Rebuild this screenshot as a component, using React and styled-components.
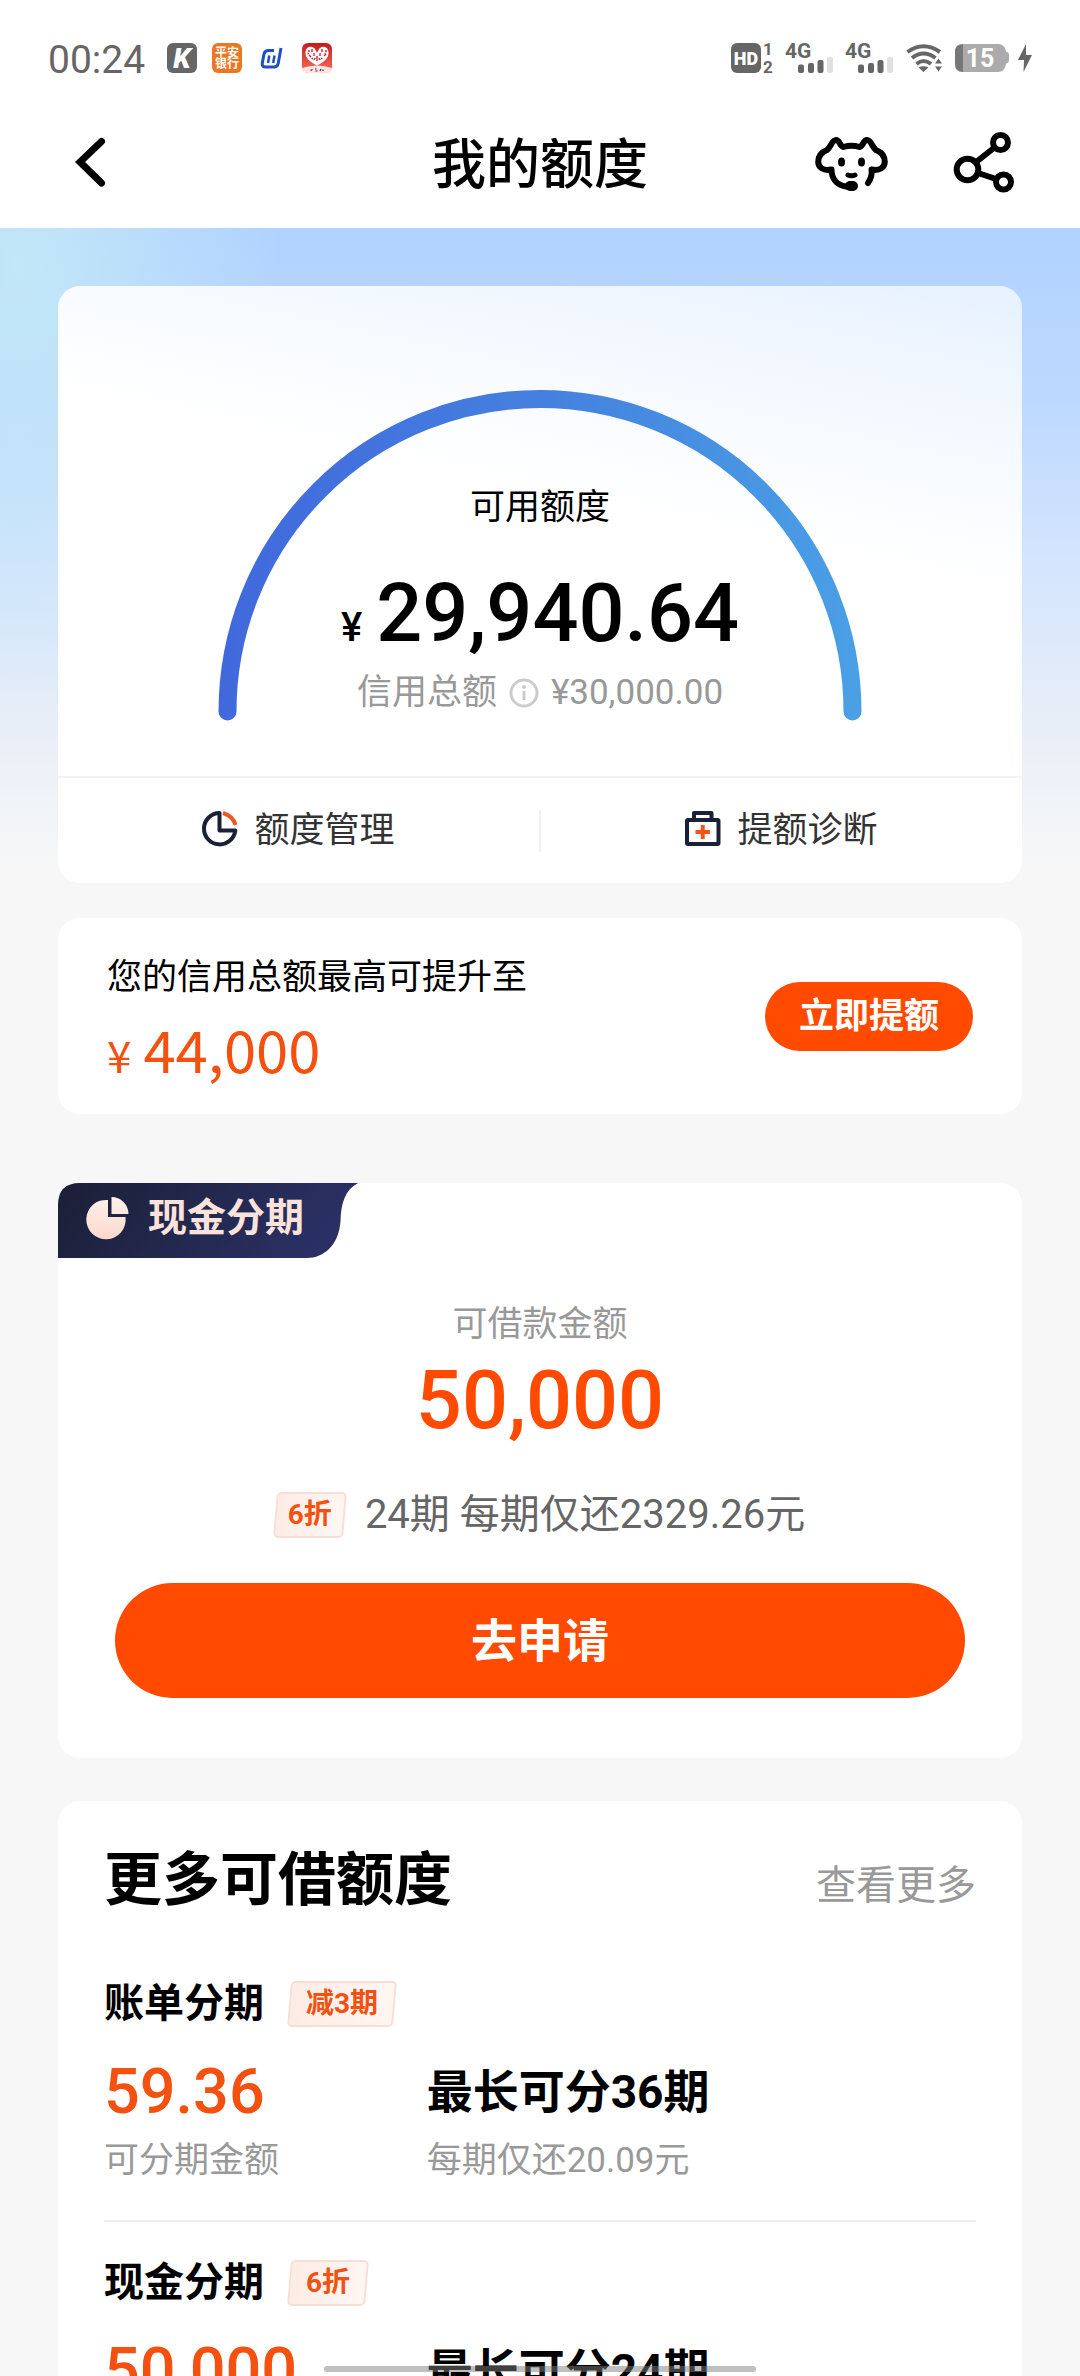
import styled, { createGlobalStyle } from 'styled-components';

const GlobalStyle = createGlobalStyle`
  :root {
    --primary: #ff4a00;
    --amount: #f4500f;
    --muted: #999;
    --page: #f7f7f7;
  }

  * {
    box-sizing: border-box;
  }

  body {
    margin: 0;
    background: var(--page);
    color: #000;
    font-family: Roboto, 'Noto Sans CJK SC', sans-serif;
  }

  button {
    padding: 0;
    border: 0;
    background: none;
    color: inherit;
    font: inherit;
    cursor: pointer;
  }

  a {
    color: inherit;
    text-decoration: none;
  }

  h1, h2, h3, p {
    margin: 0;
    font-weight: 400;
  }

  svg {
    display: block;
    flex-shrink: 0;
    overflow: visible;
  }
`;

const Screen = styled.div`
  height: 100vh;
  overflow-y: auto;
  scrollbar-width: none;
`;

const StatusBar = styled.div`
  display: flex;
  align-items: center;
  justify-content: space-between;
  height: 100px;
  padding: 16px 48px 0;
  background: #fff;
  color: #666;
`;

const StatusGroup = styled.div`
  display: flex;
  align-items: center;
  gap: ${({ $gap }) => $gap}px;
`;

const Clock = styled.time`
  margin-right: 7px;
  padding-top: 4px;
  font-size: 39px;
  line-height: 40px;
`;

const Header = styled.header`
  display: grid;
  grid-template-columns: 1fr auto 1fr;
  align-items: center;
  height: 128px;
  padding: 0 66px;
  background: #fff;
`;

const HeaderTitle = styled.h1`
  padding-top: 4px;
  font-size: 54px;
  font-weight: 500;
  line-height: 64px;
`;

const HeaderActions = styled.div`
  display: flex;
  align-items: center;
  justify-content: flex-end;
  gap: 65px;
`;

const Main = styled.main`
  display: flex;
  flex-direction: column;
  padding: 58px 58px 0;
  background:
    radial-gradient(ellipse 260px 440px at 20px 40px, #c2e7f7, rgba(194, 231, 247, 0)),
    linear-gradient(#b0d2ff, #bcd8ff 160px, #d6e6fd 350px, #e6edf8 480px, var(--page) 640px);
`;

const Card = styled.section`
  margin-bottom: ${({ $gap = 35 }) => $gap}px;
  border-radius: 22px;
  background: #fff;
`;

const LimitCard = styled(Card)`
  background: linear-gradient(192deg, #e6f1ff, #f3f8ff 130px, #fff 300px);
`;

const Gauge = styled.div`
  display: grid;
  justify-items: center;
  padding: 104px 20px 55px;

  > * {
    grid-area: 1 / 1;
  }
`;

const GaugeText = styled.div`
  display: flex;
  flex-direction: column;
  align-items: center;
  align-self: end;
  padding-bottom: 8px;
`;

const GaugeLabel = styled.h2`
  font-size: 35px;
  line-height: 50px;
`;

const GaugeAmount = styled.p`
  display: flex;
  align-items: baseline;
  gap: 14px;
  margin: 31px 0 9px;
  font-size: 81px;
  font-weight: 500;
  line-height: 100px;

  small {
    font-size: 40px;
    line-height: 1;
  }
`;

const GaugeTotal = styled.p`
  display: flex;
  align-items: center;
  gap: 12px;
  color: var(--muted);
  font-size: 35px;
  line-height: 40px;
`;

const LimitActions = styled.div`
  display: flex;
  align-items: center;
  height: 107px;
  border-top: 2px solid #f2f3f2;
`;

const LimitAction = styled.button`
  display: flex;
  flex: 1;
  align-items: center;
  justify-content: center;
  gap: 16px;
  height: 42px;
  color: #333;
  font-size: 35px;
  line-height: 42px;

  & + & {
    border-left: 2px solid #f2f2f2;
  }
`;

const RaiseCard = styled(Card)`
  display: flex;
  align-items: center;
  justify-content: space-between;
  padding: 26px 49px;
`;

const RaiseInfo = styled.div`
  padding-top: 8px;
`;

const RaiseLabel = styled.h2`
  margin-bottom: 4px;
  font-size: 35px;
  line-height: 52px;
`;

const RaiseAmount = styled.p`
  display: flex;
  align-items: baseline;
  gap: 12px;
  color: var(--amount);
  font-family: 'Noto Sans CJK SC', sans-serif;
  font-size: 58px;
  line-height: 80px;

  small {
    font-size: 44px;
    line-height: 1;
  }
`;

const PillButton = styled.button`
  border-radius: 60px;
  background: var(--primary);
  color: #fff;
  font-weight: 700;
`;

const RaiseButton = styled(PillButton)`
  height: 69px;
  padding: 0 34px;
  font-size: 35px;
  line-height: 65px;
`;

const CashCard = styled(Card)`
  padding-bottom: 60px;
`;

const CashTab = styled.div`
  position: relative;
  display: flex;
  align-items: center;
  gap: 19px;
  width: 300px;
  height: 75px;
  padding: 0 0 5px 28px;
`;

const TabShape = styled.svg`
  position: absolute;
  top: 0;
  left: 0;
`;

const TabPie = styled.svg`
  position: relative;
`;

const TabTitle = styled.h2`
  position: relative;
  color: #fbe2da;
  font-size: 39px;
  font-weight: 700;
  line-height: 48px;
`;

const CashBody = styled.div`
  display: flex;
  flex-direction: column;
  align-items: center;
  padding: 41px 57px 0;
`;

const CashLabel = styled.p`
  color: var(--muted);
  font-size: 35px;
  line-height: 52px;
`;

const CashAmount = styled.p`
  color: var(--primary);
  font-size: 81px;
  font-weight: 500;
  line-height: 100px;
`;

const CashPlan = styled.p`
  display: flex;
  align-items: center;
  gap: 20px;
  margin: 38px 0 42px;
  color: #666;
  font-size: 40px;
  line-height: 52px;
`;

const Tag = styled.span`
  position: relative;
  z-index: 0;
  padding: 0 ${({ $space = 13 }) => $space}px;
  color: var(--amount);
  font-size: 28px;
  font-weight: 700;
  line-height: 46px;

  &::before {
    content: '';
    position: absolute;
    inset: 0;
    z-index: -1;
    border: 2px solid #f9ded5;
    border-radius: 5px;
    background: linear-gradient(90deg, #fdece6, #fff6f2);
    transform: skewX(-5deg);
  }
`;

const ApplyButton = styled(PillButton)`
  align-self: stretch;
  height: 115px;
  font-size: 46px;
  line-height: 110px;
`;

const MoreCard = styled(Card)`
  padding: 39px 46px 0;
`;

const MoreHeader = styled.div`
  display: flex;
  align-items: center;
  justify-content: space-between;
  margin-bottom: 23px;
`;

const MoreTitle = styled.h2`
  font-size: 58px;
  font-weight: 700;
  line-height: 80px;
`;

const MoreLink = styled.a`
  padding-top: 12px;
  color: var(--muted);
  font-size: 40px;
  line-height: 52px;
`;

const Offer = styled.article`
  padding: 33px 0;

  & + & {
    border-top: 2px solid #eee;
  }
`;

const OfferHeader = styled.div`
  display: flex;
  align-items: center;
  gap: 25px;
  height: 56px;
  margin-bottom: 23px;
`;

const OfferName = styled.h3`
  font-size: 40px;
  font-weight: 700;
  line-height: 56px;
`;

const OfferColumns = styled.div`
  display: grid;
  grid-template-columns: 37% 1fr;
`;

const OfferAmount = styled.p`
  color: var(--amount);
  font-size: 63px;
  font-weight: 500;
  line-height: 74px;
`;

const OfferTerm = styled.p`
  font-size: 46px;
  font-weight: 700;
  line-height: 74px;
`;

const OfferNote = styled.p`
  padding-top: 6px;
  color: var(--muted);
  font-size: 35px;
  line-height: 52px;
`;

const HomeIndicator = styled.div`
  position: fixed;
  bottom: 4px;
  left: 30%;
  width: 40%;
  height: 6px;
  border-radius: 3px;
  background: rgba(128, 128, 128, 0.5);
`;

const offers = [
  {
    name: '账单分期',
    tag: '减3期',
    amount: '59.36',
    term: '最长可分36期',
    notes: ['可分期金额', '每期仅还20.09元'],
  },
  {
    name: '现金分期',
    tag: '6折',
    amount: '50,000',
    term: '最长可分24期',
    notes: [],
  },
];

function KIcon() {
  return (
    <svg width='30' height='30' viewBox='0 0 30 30'>
      <rect width='30' height='30' rx='6' fill='#666' />
      <text
        x='15'
        y='25'
        fill='#fff'
        fontFamily='Roboto'
        fontSize='28'
        fontStyle='italic'
        fontWeight='900'
        textAnchor='middle'
      >
        K
      </text>
    </svg>
  );
}

function BankIcon() {
  return (
    <svg width='30' height='30' viewBox='0 0 30 30'>
      <rect width='30' height='30' rx='6' fill='#ec7623' />
      <g
        fill='#fff'
        fontFamily='Noto Sans CJK SC'
        fontSize='12'
        fontWeight='700'
        textAnchor='middle'
      >
        <text x='15' y='14'>平安</text>
        <text x='15' y='25'>银行</text>
      </g>
    </svg>
  );
}

function BlueIcon() {
  return (
    <svg width='30' height='30' viewBox='0 0 30 30' fill='none'>
      <path
        d='M17 7.500H11.500Q7.800 7.500 7 11L5.300 20Q4.600 24 8.500 24H17Q20.500 24 21.200 20.500L24 5'
        stroke='#1d50c4'
        strokeWidth='3'
      />
      <path
        d='M11 20L12.300 12.500M16.200 20L17.500 12.500'
        stroke='#1d50c4'
        strokeWidth='2.500'
      />
    </svg>
  );
}

function HeartIcon() {
  return (
    <svg width='30' height='30' viewBox='0 0 30 30'>
      <defs>
        <linearGradient id='heart' x1='0' x2='0' y1='0' y2='1'>
          <stop offset='0' stopColor='#c41a20' />
          <stop offset='0.75' stopColor='#ee5b4e' />
        </linearGradient>
      </defs>
      <rect width='30' height='30' rx='6' fill='url(#heart)' />
      <path d='M0 25Q15 20 30 25Q30 30 24 30H6Q0 30 0 25Z' fill='#fbe3df' />
      <path
        d='M15 22.500C8 19 3 15 3.500 9C4 3 11 2 13.500 7L15 10L16.500 7C19 2 26 3 26.500 9C27 15 22 19 15 22.500Z'
        fill='#fff'
      />
      <path
        d='M6 8h2M10 6v3M7 12l2 2M12 10v3M18 10v3M15 13v5M12 17l1-2M18 17l-1-2M20 6v3M23 8h2M22 13l2-2M9.500 15.500h1.500M19 15.500h1.500M5.500 10.500h1.500M22.500 10.500h1'
        stroke='#d2232a'
        strokeWidth='1.400'
      />
      <path d='M8.500 27.500l2-1M13 26h1.500M13.500 28h2M18 28l1-2M21 26.500v1.500' stroke='#5a2222' strokeWidth='1.200' />
    </svg>
  );
}

function HdIcon() {
  return (
    <svg width='42' height='30' viewBox='0 0 42 30' fontFamily='Roboto'>
      <rect width='30' height='30' rx='6' fill='#666' />
      <text
        x='15'
        y='22'
        fill='#fff'
        fontSize='18'
        fontWeight='900'
        textAnchor='middle'
      >
        HD
      </text>
      <g fill='#666' fontSize='17' fontWeight='700' textAnchor='middle'>
        <text x='37' y='12'>1</text>
        <text x='37' y='30'>2</text>
      </g>
    </svg>
  );
}

function SignalIcon() {
  return (
    <svg width='47' height='30' viewBox='0 0 47 30'>
      <text
        x='-1'
        y='15'
        fill='#666'
        fontFamily='Roboto'
        fontSize='21'
        fontWeight='700'
      >
        4G
      </text>
      <g fill='#666'>
        <rect x='12' y='21.500' width='6' height='8.500' rx='2' />
        <rect x='22' y='20' width='6' height='10' rx='2' />
        <rect x='31.500' y='17' width='6' height='13' rx='2' />
        <rect x='41' y='14' width='6' height='16' rx='2' fill='#e0e0e0' />
      </g>
    </svg>
  );
}

function WifiIcon() {
  return (
    <svg width='36' height='28' viewBox='0 0 36 28'>
      <g fill='none' stroke='#666' strokeWidth='4'>
        <path d='M1.500 8Q17.500 -3.500 34 8' />
        <path d='M6 14Q17.500 5 29.500 14' />
        <path d='M10.500 20Q17.500 14 25 20' />
      </g>
      <path d='M12.500 23.500Q17.500 21 22.500 23.500L17.500 28Z' fill='#666' />
      <path d='M29 19.500L32.500 14.500L36 19.500ZM29 22.500L32.500 27.500L36 22.500Z' fill='#666' />
    </svg>
  );
}

function BatteryIcon() {
  return (
    <svg width='54' height='28' viewBox='0 0 54 28'>
      <path
        d='M8 0H43Q50 0 51 7.500Q54 8 54 11V16Q54 19 51 19.500Q50 28 43 28H8Z'
        fill='#ababab'
      />
      <path d='M8 0V28Q0 28 0 20V8Q0 0 8 0Z' fill='#777' />
      <text
        x='25'
        y='23'
        fill='#fff'
        fontFamily='Roboto'
        fontSize='25'
        fontWeight='700'
        textAnchor='middle'
      >
        15
      </text>
    </svg>
  );
}

function BoltIcon() {
  return (
    <svg width='14' height='28' viewBox='0 0 14 28'>
      <path d='M8 0L0 16H6L5.500 28L14 11H8Z' fill='#666' />
    </svg>
  );
}

function BackIcon() {
  return (
    <svg width='50' height='60' viewBox='0 0 50 60' fill='none'>
      <path
        d='M35.500 7.500L14 28L35.500 49'
        stroke='#000'
        strokeWidth='7'
        strokeLinecap='round'
      />
    </svg>
  );
}

function ServiceIcon() {
  return (
    <svg width='73' height='58' viewBox='0 0 73 58' fill='none'>
      <g stroke='#000' strokeWidth='6' strokeLinecap='round' strokeLinejoin='round'>
        <path d='M31 51.500C22 50 16.500 44 16.500 34.500C8 36.500 3.500 32 3.200 27C3 20 7 17 12 15C16 12 17 5 21 5C25 5 24.500 11 28.500 12Q36.500 9.500 44.500 12C48.500 11 48 5 52 5C56 5 57 12 61 15C66 17 70 20 69.800 27C69.500 32 65 36.500 56.500 34.500C57.500 38 56 44 53 48' />
        <path d='M33 40Q36.500 41.500 40 40' strokeWidth='5' />
      </g>
      <ellipse cx='26.500' cy='27' rx='3.500' ry='4.500' fill='#000' />
      <ellipse cx='46.500' cy='27' rx='3.500' ry='4.500' fill='#000' />
      <rect x='30' y='46' width='13' height='10' rx='5' fill='#000' />
    </svg>
  );
}

function ShareIcon() {
  return (
    <svg width='61' height='64' viewBox='0 0 61 64' fill='none'>
      <g stroke='#000' strokeWidth='6'>
        <circle cx='14.500' cy='37.500' r='10.800' />
        <circle cx='47.500' cy='10.500' r='7.500' />
        <circle cx='50.500' cy='50' r='7.500' />
        <path d='M22.500 30.500L41.500 15.500M25 41L43 47' />
      </g>
    </svg>
  );
}

function GaugeArc() {
  return (
    <svg width='644' height='331' viewBox='0 0 644 331' fill='none'>
      <defs>
        <linearGradient id='arc' x1='0' x2='1' y1='0' y2='0'>
          <stop offset='0' stopColor='#4169dc' />
          <stop offset='0.5' stopColor='#4480df' />
          <stop offset='1' stopColor='#4a9fe5' />
        </linearGradient>
      </defs>
      <path
        d='M9.500 321.500A312.500 312.500 0 0 1 634.500 321.500'
        stroke='url(#arc)'
        strokeWidth='18'
        strokeLinecap='round'
      />
    </svg>
  );
}

function InfoIcon() {
  return (
    <svg width='30' height='30' viewBox='0 0 30 30' fill='none'>
      <circle cx='15' cy='15' r='13' stroke='#ccc' strokeWidth='3' />
      <path d='M15 13V22' stroke='#ccc' strokeWidth='3' />
      <circle cx='15' cy='9' r='2' fill='#ccc' />
    </svg>
  );
}

function PieIcon() {
  return (
    <svg width='36' height='42' viewBox='0 0 36 42' fill='none' strokeWidth='4'>
      <path
        d='M17.500 3A15.700 15.700 0 1 0 33.300 20.500H17.500Z'
        stroke='#1b2036'
        strokeLinejoin='round'
      />
      <path d='M21 3Q31 6 33.500 15' stroke='#e95a1c' />
    </svg>
  );
}

function KitIcon() {
  return (
    <svg width='36' height='42' viewBox='0 0 36 42' fill='none' strokeWidth='4'>
      <g stroke='#1b2036' strokeLinejoin='round'>
        <rect x='2' y='10' width='31.500' height='24' rx='1' />
        <path d='M9 10V3H26.500V10' />
      </g>
      <path d='M10.500 22H25M17.750 15V29' stroke='#f0541a' />
    </svg>
  );
}

function SystemStatus() {
  return (
    <StatusBar>
      <StatusGroup $gap={15}>
        <Clock>00:24</Clock>
        <KIcon />
        <BankIcon />
        <BlueIcon />
        <HeartIcon />
      </StatusGroup>
      <StatusGroup $gap={13}>
        <HdIcon />
        <SignalIcon />
        <SignalIcon />
        <WifiIcon />
        <StatusGroup $gap={9}>
          <BatteryIcon />
          <BoltIcon />
        </StatusGroup>
      </StatusGroup>
    </StatusBar>
  );
}

function CashTabHeader() {
  return (
    <CashTab>
      <TabShape width='300' height='75' viewBox='0 0 300 75'>
        <defs>
          <linearGradient id='tab' x1='0' x2='1' y1='0' y2='0.2'>
            <stop offset='0' stopColor='#1b1f36' />
            <stop offset='1' stopColor='#2a3064' />
          </linearGradient>
        </defs>
        <path
          d='M0 75V22Q0 0 22 0H300C287 7 283 20 282.500 38C281 62 266 75 249 75Z'
          fill='url(#tab)'
        />
      </TabShape>
      <TabPie width='43' height='42' viewBox='0 0 43 42'>
        <defs>
          <linearGradient id='pie' x1='0' x2='0' y1='0' y2='1'>
            <stop offset='0' stopColor='#fff1ec' />
            <stop offset='1' stopColor='#fbd8cb' />
          </linearGradient>
        </defs>
        <path
          d='M22 3V20H39.500A19.700 19.700 0 1 1 22 3ZM25.500 0A17 17 0 0 1 42.500 17H25.500Z'
          fill='url(#pie)'
        />
      </TabPie>
      <TabTitle>现金分期</TabTitle>
    </CashTab>
  );
}

function OfferItem({ offer }) {
  return (
    <Offer>
      <OfferHeader>
        <OfferName>{offer.name}</OfferName>
        <Tag $space={17}>{offer.tag}</Tag>
      </OfferHeader>
      <OfferColumns>
        <OfferAmount>{offer.amount}</OfferAmount>
        <OfferTerm>{offer.term}</OfferTerm>
        {offer.notes.map((note) => (
          <OfferNote key={note}>{note}</OfferNote>
        ))}
      </OfferColumns>
    </Offer>
  );
}

function App() {
  return (
    <Screen>
      <GlobalStyle />
      <SystemStatus />
      <Header>
        <button type='button' aria-label='返回'>
          <BackIcon />
        </button>
        <HeaderTitle>我的额度</HeaderTitle>
        <HeaderActions>
          <button type='button' aria-label='客服'>
            <ServiceIcon />
          </button>
          <button type='button' aria-label='分享'>
            <ShareIcon />
          </button>
        </HeaderActions>
      </Header>

      <Main>
        <LimitCard>
          <Gauge>
            <GaugeArc />
            <GaugeText>
              <GaugeLabel>可用额度</GaugeLabel>
              <GaugeAmount>
                <small>¥</small>29,940.64
              </GaugeAmount>
              <GaugeTotal>
                信用总额
                <InfoIcon />
                ¥30,000.00
              </GaugeTotal>
            </GaugeText>
          </Gauge>
          <LimitActions>
            <LimitAction type='button'>
              <PieIcon />
              额度管理
            </LimitAction>
            <LimitAction type='button'>
              <KitIcon />
              提额诊断
            </LimitAction>
          </LimitActions>
        </LimitCard>

        <RaiseCard $gap={69}>
          <RaiseInfo>
            <RaiseLabel>您的信用总额最高可提升至</RaiseLabel>
            <RaiseAmount>
              <small>¥</small>44,000
            </RaiseAmount>
          </RaiseInfo>
          <RaiseButton type='button'>立即提额</RaiseButton>
        </RaiseCard>

        <CashCard $gap={43}>
          <CashTabHeader />
          <CashBody>
            <CashLabel>可借款金额</CashLabel>
            <CashAmount>50,000</CashAmount>
            <CashPlan>
              <Tag>6折</Tag>
              24期 每期仅还2329.26元
            </CashPlan>
            <ApplyButton type='button'>去申请</ApplyButton>
          </CashBody>
        </CashCard>

        <MoreCard $gap={0}>
          <MoreHeader>
            <MoreTitle>更多可借额度</MoreTitle>
            <MoreLink href='#more'>查看更多</MoreLink>
          </MoreHeader>
          {offers.map((offer) => (
            <OfferItem key={offer.name} offer={offer} />
          ))}
        </MoreCard>
      </Main>
      <HomeIndicator />
    </Screen>
  );
}

export default App;
